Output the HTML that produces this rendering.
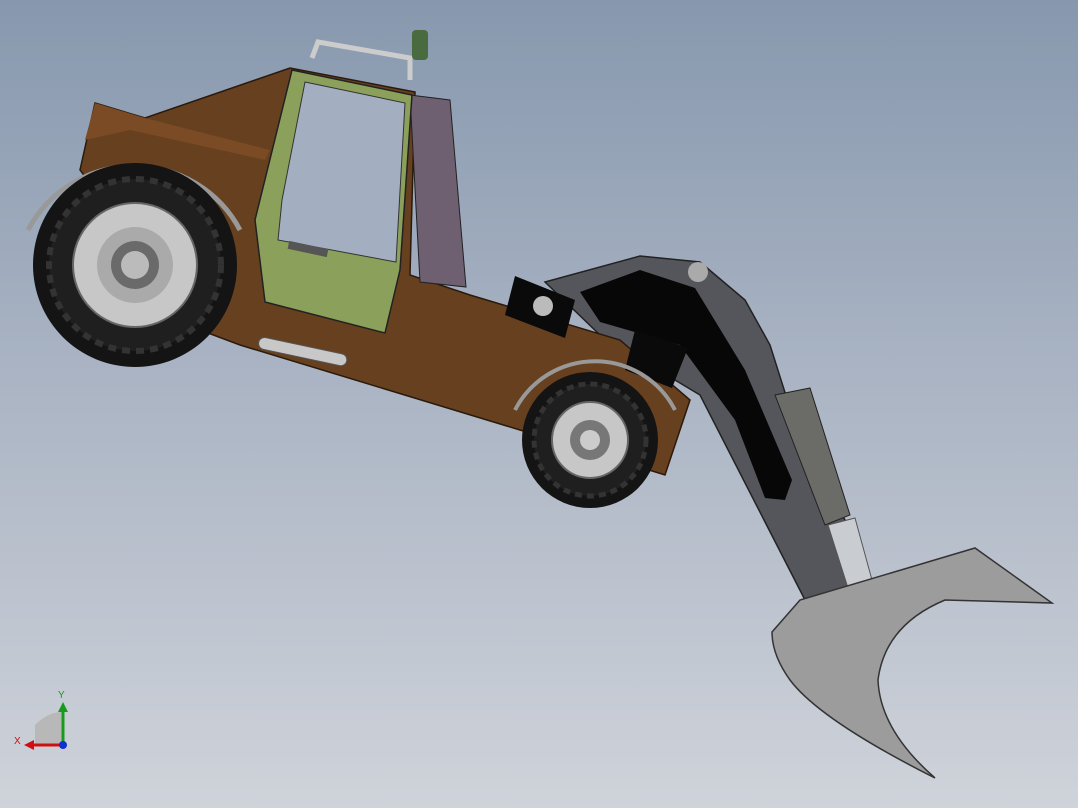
<!DOCTYPE html>
<html><head><meta charset="utf-8"><style>
html,body{margin:0;padding:0;width:1078px;height:808px;overflow:hidden}
body{background:linear-gradient(180deg,#8798ae 0%,#a9b3c3 45%,#cfd3da 100%)}
svg{position:absolute;left:0;top:0}
</style></head><body>
<svg width="1078" height="808" viewBox="0 0 1078 808" xmlns="http://www.w3.org/2000/svg">
<!-- arm -->
<polygon points="545,282 640,256 700,262 745,300 770,345 800,440 845,520 860,585 805,600 700,395 600,335" fill="#55565c" stroke="#222" stroke-width="1.5"/>
<polygon points="580,292 640,270 695,288 745,370 792,480 785,500 765,498 735,420 680,345 600,322" fill="#070707"/>
<polygon points="775,395 810,388 850,515 825,525" fill="#6b6b68" stroke="#222"/>
<polygon points="828,525 855,518 872,580 848,588" fill="#c9ccd0" stroke="#555"/>
<!-- bucket -->
<path d="M772,632 L800,600 L975,548 L1052,603 L945,600 Q885,625 878,680 Q880,730 935,778 Q820,720 790,680 Q772,655 772,632 Z" fill="#9c9c9c" stroke="#333" stroke-width="1.5"/>
<!-- body -->
<polygon points="95,103 145,118 290,68 415,92 410,275 470,295 620,340 690,400 665,475 520,430 240,345 200,330 80,170" fill="#66401f" stroke="#2a1a0c" stroke-width="1.5"/>
<polygon points="95,103 145,118 270,150 265,160 130,130 85,140" fill="#7a4b24"/>
<!-- purple panel -->
<polygon points="410,95 450,100 466,287 420,282" fill="#6e6070" stroke="#222"/>
<!-- cab -->
<polygon points="292,70 412,95 400,270 385,333 265,302 255,220" fill="#8ba05a" stroke="#222" stroke-width="1.5"/>
<polygon points="305,82 405,103 396,262 278,240 282,200" fill="#a3afc0" stroke="#333"/>
<rect x="288" y="245" width="40" height="8" fill="#555" transform="rotate(12 308 249)"/>
<!-- roof bar & light -->
<path d="M312,58 L318,42 L410,58 L410,80" fill="none" stroke="#ccc" stroke-width="5"/>
<rect x="412" y="30" width="16" height="30" rx="4" fill="#4a6a40"/>
<!-- step -->
<rect x="258" y="345" width="90" height="12" rx="6" fill="#c8c8c8" stroke="#555" transform="rotate(12 300 350)"/>
<!-- blocks -->
<polygon points="515,276 575,300 565,338 505,315" fill="#0a0a0a"/>
<circle cx="543" cy="306" r="10" fill="#bbb"/>
<polygon points="635,330 688,348 672,388 625,370" fill="#0a0a0a"/>
<circle cx="698" cy="272" r="10" fill="#aaa"/>
<!-- rear wheel -->
<path d="M28,230 A120,120 0 0 1 240,230" fill="none" stroke="#999" stroke-width="5"/>
<circle cx="135" cy="265" r="102" fill="#141414"/>
<circle cx="135" cy="265" r="86" fill="#1f1f1f" stroke="#333" stroke-width="6" stroke-dasharray="8 6"/>
<circle cx="135" cy="265" r="62" fill="#c7c7c7" stroke="#666" stroke-width="2"/>
<circle cx="135" cy="265" r="38" fill="#aaa"/>
<circle cx="135" cy="265" r="24" fill="#6a6a6a"/>
<circle cx="135" cy="265" r="14" fill="#bbb"/>
<!-- front wheel -->
<path d="M515,410 A90,90 0 0 1 675,410" fill="none" stroke="#999" stroke-width="4"/>
<circle cx="590" cy="440" r="68" fill="#141414"/>
<circle cx="590" cy="440" r="56" fill="#1f1f1f" stroke="#333" stroke-width="5" stroke-dasharray="7 5"/>
<circle cx="590" cy="440" r="38" fill="#c7c7c7" stroke="#666" stroke-width="2"/>
<circle cx="590" cy="440" r="20" fill="#777"/>
<circle cx="590" cy="440" r="10" fill="#ccc"/>
<!-- triad -->
<path d="M35,745 L35,725 Q48,712 62,712 L62,745 Z" fill="#b8b8b8"/>
<line x1="63" y1="745" x2="63" y2="710" stroke="#1a9a1a" stroke-width="3"/>
<polygon points="58,712 68,712 63,702" fill="#1a9a1a"/>
<line x1="63" y1="745" x2="32" y2="745" stroke="#d01010" stroke-width="3"/>
<polygon points="34,740 34,750 24,745" fill="#d01010"/>
<circle cx="63" cy="745" r="4" fill="#1030d0"/>
<text x="58" y="698" font-family="Liberation Sans, sans-serif" font-size="10" fill="#1a9a1a">Y</text>
<text x="14" y="744" font-family="Liberation Sans, sans-serif" font-size="10" fill="#d01010">X</text>
</svg>
</body></html>
